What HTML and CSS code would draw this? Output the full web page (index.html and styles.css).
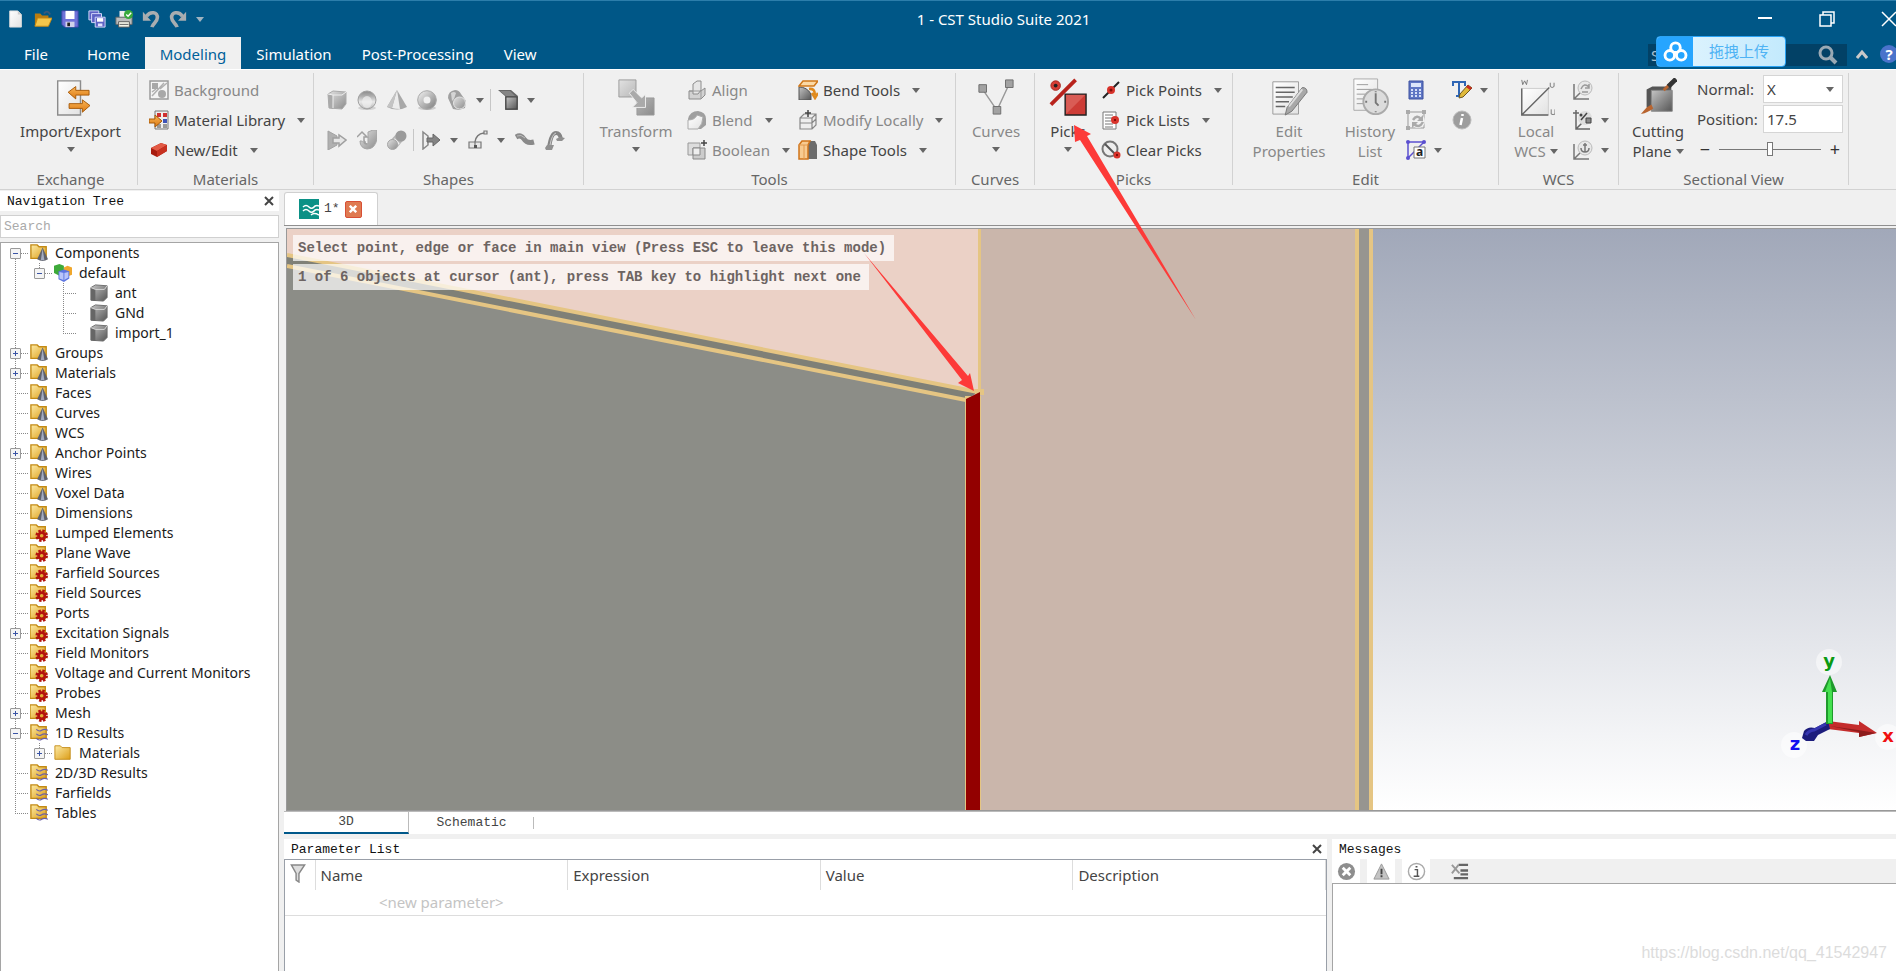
FILE: index.html
```html
<!DOCTYPE html>
<html lang="en">
<head>
<meta charset="utf-8">
<title>1 - CST Studio Suite 2021</title>
<link rel="stylesheet" href="styles.css">
</head>
<body>
<svg class="defs" aria-hidden="true">
  <defs>
    <linearGradient id="gm" x1="0" y1="0" x2="1" y2="1"><stop offset="0" stop-color="#e2e2e2"/><stop offset="1" stop-color="#8c8c8c"/></linearGradient>
    <linearGradient id="gd" x1="0" y1="0" x2="1" y2="1"><stop offset="0" stop-color="#c4c4c4"/><stop offset="1" stop-color="#555"/></linearGradient>
    <linearGradient id="gl" x1="0" y1="0" x2="1" y2="1"><stop offset="0" stop-color="#fff"/><stop offset="1" stop-color="#e2e2e2"/></linearGradient>
    <linearGradient id="gs" x1="0" y1="0" x2="0" y2="1"><stop offset="0" stop-color="#8a8a8a"/><stop offset="0.3" stop-color="#b0b0b0"/><stop offset="0.6" stop-color="#e8e8e8"/><stop offset="1" stop-color="#b5b5b5"/></linearGradient>
    <linearGradient id="gf" x1="0" y1="0" x2="1" y2="1"><stop offset="0" stop-color="#fdeba6"/><stop offset="1" stop-color="#dc9d17"/></linearGradient>
    <linearGradient id="go" x1="0" y1="0" x2="0" y2="1"><stop offset="0" stop-color="#f9b456"/><stop offset="1" stop-color="#dc7a12"/></linearGradient>
    <symbol id="doc" viewBox="0 0 20 20"><path d="M3 1h9l4 4v14H3z" fill="url(#gl)" stroke="#ddd"/><path d="M12 1v4h4" fill="#ccc"/></symbol>
    <symbol id="open" viewBox="0 0 20 20"><path d="M1 4h6l2 2h7v12H1z" fill="#b97c10"/><path d="M4 9h16l-4 9H1z" fill="#f4c64b" stroke="#c98b12"/><path d="M11 4q4-5 7 1" stroke="#3a5a78" fill="none" stroke-width="2"/></symbol>
    <symbol id="save" viewBox="0 0 20 20"><path d="M1 1h18v18H4l-3-3z" fill="#6f72d8" stroke="#4446ac"/><path d="M5 1h10v9H5z" fill="#fff"/><path d="M5 13h10v6H5z" fill="#cfd2ea"/><path d="M7 14h3v4H7z" fill="#222"/></symbol>
    <symbol id="saveall" viewBox="0 0 20 20"><g stroke="#dfe2ff" fill="#5d62c4"><path d="M1 1h11v10H1z"/><path d="M4 4h11v10H4z"/><path d="M8 8h11v11H8z"/></g><path d="M10 9h7v4h-7z" fill="#fff"/><path d="M11 15h5v3h-5z" fill="#dfe2ff"/></symbol>
    <symbol id="print" viewBox="0 0 20 20"><path d="M5 1h10v7H5z" fill="#eee"/><path d="M1 8h18v8H1z" fill="#bdbdbd" stroke="#666"/><path d="M4 13h12v6H4z" fill="#f5f5e8" stroke="#555"/><path d="M5 16h10" stroke="#555"/><circle cx="15" cy="5" r="5" fill="#39a93c"/><path d="M12.500 5l2 2 3.500-4" stroke="#fff" fill="none" stroke-width="1.500"/></symbol>
    <symbol id="undo" viewBox="0 0 20 20"><path d="M5 7c4-6 13-5 12 2 0 4-5 6-6 10" fill="none" stroke="#a9adb0" stroke-width="4"/><path d="M1 2v10h9z" fill="#a9adb0"/></symbol>
    <symbol id="redo" viewBox="0 0 20 20"><path d="M15 7C11 1 2 2 3 9c0 4 5 6 6 10" fill="none" stroke="#a9adb0" stroke-width="4"/><path d="M19 2v10h-9z" fill="#a9adb0"/></symbol>
    <symbol id="impexp" viewBox="0 0 40 40"><path d="M6 3h24v36H6z" fill="url(#gl)" stroke="#8c8c8c" stroke-width="1.500"/><path d="M17 15l8-6v4h14v5H25v4z" fill="url(#go)" stroke="#a85b0a"/><path d="M40 29l-8-6v4H18v5h14v4z" fill="url(#go)" stroke="#a85b0a"/></symbol>
    <symbol id="bg" viewBox="0 0 20 20"><path d="M1 1h18v18H1z" fill="#f4f4f4" stroke="#9a9a9a" stroke-width="1.500"/><path d="M3 3h6v6H3z" fill="#a8a8a8"/><circle cx="13" cy="14" r="4" fill="#a8a8a8"/><path d="M3 16L15 3m-4 6l7-6M3 12l4-3" stroke="#b0b0b0" stroke-width="1.500"/></symbol>
    <symbol id="matlib" viewBox="0 0 20 20"><path d="M6 1h13v18H6z" fill="#eee" stroke="#777"/><path d="M8 3h4v4H8zM14 3h4v4h-4z" fill="#cf3030"/><path d="M8 9h4v4H8z" fill="#666"/><path d="M14 9h4v4h-4z" fill="#3d53b8"/><path d="M8 14h4v4H8zM14 14h4v4h-4z" fill="#999"/><path d="M0 9h6V5l7 6-7 6v-4H0z" fill="url(#go)" stroke="#a85b0a"/></symbol>
    <symbol id="brick" viewBox="0 0 20 20"><path d="M2 8l10-5 6 2v6L8 17l-6-3z" fill="#a81c0f"/><path d="M2 8l10-5 6 2-10 6z" fill="#e35a45"/><path d="M8 11v6l10-6V5z" fill="#c73120"/></symbol>
    <symbol id="cube" viewBox="0 0 20 20"><path d="M1 4l5-3 13 1v12l-4 5-13-1z" fill="url(#gm)" stroke="#aaa"/><path d="M1 4l5 1v14l-4-1z" fill="#aaa"/><path d="M1 4l5 1 9 0 4-3M6 5v13" fill="none" stroke="#eee"/></symbol>
    <symbol id="cubed" viewBox="0 0 20 20"><path d="M1 4l5-3 13 1v13l-4 4-14-1z" fill="url(#gd)" stroke="#666"/><path d="M1 4l5 2v13l-5-1z" fill="#666"/><path d="M1 4l5 2h10l3-4" fill="none" stroke="#ddd"/></symbol>
    <symbol id="sphere" viewBox="0 0 20 20"><ellipse cx="10" cy="18" rx="9" ry="2" fill="#d2d2d2"/><circle cx="10" cy="10" r="9" fill="url(#gs)" stroke="#a0a0a0"/><ellipse cx="10" cy="12" rx="5" ry="6" fill="#efefef" fill-opacity="0.700"/></symbol>
    <symbol id="cone" viewBox="0 0 20 20"><path d="M10 0l10 17q-10 5-20 0z" fill="#a8a8a8"/><path d="M10 0l3 19q-5 0-8-1z" fill="#ececec"/><path d="M10 0L5 18l-5-1z" fill="#c4c4c4"/></symbol>
    <symbol id="torus" viewBox="0 0 20 20"><ellipse cx="10" cy="18" rx="9" ry="2" fill="#ccc"/><circle cx="10" cy="10" r="6.500" fill="none" stroke="url(#gm)" stroke-width="6"/><circle cx="10" cy="10" r="9.300" fill="none" stroke="#aaa"/></symbol>
    <symbol id="cyl" viewBox="0 0 20 20"><path d="M1 8q0-7 7-8 4 0 6 4l5 7-1 7-6 2-6-1z" fill="#a0a0a0"/><path d="M4 3q3-2 5 0L7 9l-2 2z" fill="#d5d5d5"/><circle cx="12.500" cy="13" r="6" fill="url(#gm)" stroke="#e4e4e4"/></symbol>
    <symbol id="extr" viewBox="0 0 20 20"><path d="M0 0h13l7 6v14H7V6z" fill="#666"/><path d="M2 1h10l5 5H8z" fill="#858585"/><path d="M8 7h11v12H8z" fill="url(#gd)" stroke="#444"/></symbol>
    <symbol id="push" viewBox="0 0 20 20"><path d="M1 1l9 5v9l-9 5z" fill="#b0b0b0" stroke="#a2a2a2"/><path d="M6 8h6V5l7 5-7 6v-3H6z" fill="#e6e6e6" stroke="#a0a0a0" stroke-width="1.500"/></symbol>
    <symbol id="rot" viewBox="0 0 20 20"><path d="M11 2l5-2h4v9q-2 10-10 10-7-1-7-8h5q0 3 3 3z" fill="url(#gm)" stroke="#a5a5a5"/><path d="M0 7l5-5 5 5H7v4q0 3 3 3" fill="#eee" stroke="#a0a0a0" stroke-width="1.500"/></symbol>
    <symbol id="loft" viewBox="0 0 20 20"><path d="M1 13L12 1l7 6L9 19q-7 1-8-6z" fill="#b5b5b5"/><circle cx="14" cy="6" r="5.500" fill="#9a9a9a"/><path d="M7 9l5 5" stroke="#eee" stroke-width="2"/><circle cx="5.500" cy="14.500" r="5" fill="url(#gm)" stroke="#a5a5a5"/></symbol>
    <symbol id="face" viewBox="0 0 20 20"><path d="M2 2l5 4v9l-5 4z" fill="#eee" stroke="#888" stroke-width="1.500"/><path d="M6 8h6V4l7 6-7 6v-4H6z" fill="#848484" stroke="#666"/></symbol>
    <symbol id="bond" viewBox="0 0 20 20"><path d="M1 12h12v6H1zM7 12v6M16 1h3v3h-3z" fill="#e6e6e6" stroke="#777" stroke-width="1.200"/><path d="M6 15h3v3H6z" fill="#555"/><path d="M7 12Q8 4 16 3" fill="none" stroke="#777" stroke-width="1.500"/></symbol>
    <symbol id="wave" viewBox="0 0 20 20"><path d="M1 7q5-3 8 2t10 3" fill="none" stroke="#8a8a8a" stroke-width="5"/><path d="M2 6q4-2 8 2" fill="none" stroke="#bbb"/></symbol>
    <symbol id="wire" viewBox="0 0 20 20"><path d="M4 18Q6 3 11 3q4 0 5 6" fill="none" stroke="#858585" stroke-width="4"/><path d="M11 9l4-2 5 1-3 3h-5zM0 18l2-3h7l-2 5H1z" fill="#909090"/><path d="M5 15Q7 4 11 3" fill="none" stroke="#ccc"/></symbol>
    <symbol id="trans" viewBox="0 0 40 40"><path d="M2 2h18v18H2zM21 21h18v18H21z" fill="url(#gm)" stroke="#9b9b9b"/><path d="M13 16l4-4 9 9 4-4v14H16l5-5z" fill="#aaa" stroke="#eee"/></symbol>
    <symbol id="align" viewBox="0 0 20 20"><path d="M2 11h12l4-3v7l-4 4H2z" fill="#d2d2d2" stroke="#8c8c8c"/><path d="M6 4l4-3h4v9l-3 4H6z" fill="#e6e6e6" stroke="#8c8c8c"/><path d="M2 11h12v8" fill="none" stroke="#999"/></symbol>
    <symbol id="blend" viewBox="0 0 20 20"><path d="M1 19V9q2-8 10-8 8 1 8 8v6l-5 4z" fill="#9f9f9f"/><path d="M1 10q7 0 9-5l6 2q0 7-5 12H1z" fill="url(#gl)" stroke="#aaa"/></symbol>
    <symbol id="bool" viewBox="0 0 20 20"><path d="M1 3h12v12H1z" fill="#ddd" stroke="#999"/><path d="M6 8h12v11H6z" fill="#ccc" stroke="#888"/><path d="M6 8h7v7H6z" fill="#eee" stroke="#888"/><path d="M17 0v6M14 3h6" stroke="#444" stroke-width="1.500"/></symbol>
    <symbol id="bend" viewBox="0 0 20 20"><path d="M1 7q8 0 12 7v6H1z" fill="url(#gd)" stroke="#555"/><path d="M5 1h15l-4 5H1z" fill="#fbd9a5" stroke="#d0781a" stroke-width="1.500"/><path d="M11 9q6-1 6 6m-3-2l3 5 3-5" fill="none" stroke="#e08a1c" stroke-width="2.500"/></symbol>
    <symbol id="modify" viewBox="0 0 20 20"><path d="M2 8l4-4h12v11l-4 4H2zM2 8h12l4-4M14 8v11M2 13h12l4-4" fill="#eee" stroke="#888" stroke-width="1.200"/><path d="M10 0v7M7 3h6" stroke="#444" stroke-width="1.500"/></symbol>
    <symbol id="shape" viewBox="0 0 20 20"><path d="M10 5l2-4h5l2 4v14h-9z" fill="#6c6c6c"/><path d="M1 5l3-4h8l-2 4v14H1z" fill="#f8cb91" stroke="#d0741a" stroke-width="1.500"/><path d="M1 5h9M6 5v14" stroke="#e39a4e"/></symbol>
    <symbol id="curve" viewBox="0 0 40 40"><path d="M6 12l15 22L34 6" fill="none" stroke="#999" stroke-width="1.500"/><g fill="#a2a2a2" stroke="#6d6d6d"><path d="M2 7h8v8H2zM30 2h8v8h-8zM17 30h8v8h-8z"/></g></symbol>
    <symbol id="picks" viewBox="0 0 40 40"><path d="M2 28L28 2" stroke="#b8231c" stroke-width="4"/><circle cx="7" cy="8" r="5" fill="#d63e35" stroke="#a8241c"/><circle cx="7" cy="8" r="2" fill="#222"/><path d="M17 17h22v22H17z" fill="#cd3c36" stroke="#222" stroke-width="1.500"/><path d="M18 38V18h20z" fill="#d95c55"/></symbol>
    <symbol id="ppts" viewBox="0 0 20 20"><path d="M2 18L18 2" stroke="#222" stroke-width="2"/><circle cx="10" cy="10" r="4" fill="#d8332b"/><circle cx="10" cy="10" r="1.500" fill="#7e100b"/></symbol>
    <symbol id="plst" viewBox="0 0 20 20"><path d="M2 2h13v17H2z" fill="#fff" stroke="#777"/><path d="M4 5h8M4 8h7M4 11h6M4 14h8M4 17h8" stroke="#777"/><circle cx="14" cy="10" r="4" fill="#d8332b"/><circle cx="14" cy="10" r="1" fill="#600"/></symbol>
    <symbol id="pclr" viewBox="0 0 20 20"><circle cx="9" cy="9" r="7.500" fill="#eee" stroke="#777" stroke-width="2"/><path d="M4 4l10 10" stroke="#555" stroke-width="2"/><circle cx="16" cy="15" r="3.500" fill="#d8332b"/><circle cx="16" cy="15" r="1" fill="#600"/></symbol>
    <symbol id="eprop" viewBox="0 0 40 40"><path d="M3 4h27v34H3z" fill="url(#gl)" stroke="#999"/><path d="M6 10h20M6 15h20M6 20h18M6 25h14M6 30h10" stroke="#666" stroke-width="1.500"/><path d="M34 10q5 0 5 5L23 35l-7 4 2-8z" fill="#a8a8a8" stroke="#777"/><path d="M20 30l14-18" stroke="#ddd" stroke-width="2"/></symbol>
    <symbol id="hist" viewBox="0 0 40 40"><path d="M3 1h25v33H3z" fill="url(#gl)" stroke="#aaa"/><path d="M6 7h12M6 12h16M6 17h9M6 22h7M6 27h7" stroke="#999"/><circle cx="26" cy="25" r="13" fill="#dcdcdc" stroke="#aaa" stroke-width="2"/><path d="M26 16v10l3 3M26 14v1M37 25h-2M26 36v-1M15 25h2" stroke="#777" stroke-width="2" fill="none"/></symbol>
    <symbol id="calc" viewBox="0 0 20 20"><path d="M3 1h14v18H3z" fill="#5f76c4" stroke="#3c51a0"/><path d="M5 3h10v4H5z" fill="#dce6fa"/><path d="M5 10h10M5 13h10M5 16h10" stroke="#d5dff8" stroke-width="2" stroke-dasharray="2 2"/></symbol>
    <symbol id="upd" viewBox="0 0 20 20"><path d="M2 2h16v16H2z" fill="none" stroke="#999"/><g fill="#aaa"><path d="M0 0h4v4H0zM16 0h4v4h-4zM0 16h4v4H0z"/></g><circle cx="12" cy="11" r="7" fill="#f0f0f0"/><path d="M7 10q4-6 8-1M17 12q-4 7-9 2" fill="none" stroke="#aaa" stroke-width="2.500"/><path d="M17 5v6h-6zM6 18v-6h6z" fill="#aaa"/></symbol>
    <symbol id="ren" viewBox="0 0 20 20"><path d="M2 18V2h16M2 18L18 2" fill="none" stroke="#5b50d0" stroke-width="1.500"/><g fill="#5b50d0"><circle cx="2" cy="2" r="2"/><circle cx="18" cy="2" r="2"/><circle cx="2" cy="18" r="2"/></g><path d="M8 7h11v11H8z" fill="#fff" stroke="#777"/><text x="10" y="16" font-size="12" font-weight="700" fill="#222">a</text></symbol>
    <symbol id="txt" viewBox="0 0 20 20"><path d="M1 6V2h12v4M7 2v14M4 16h6" fill="none" stroke="#2f66b5" stroke-width="2"/><path d="M16 5l4 3-9 9-4 1 1-4z" fill="#dfb93a" stroke="#6c5620"/><path d="M16 5l4 3-2 2-4-3z" fill="#c92a22"/></symbol>
    <symbol id="info" viewBox="0 0 20 20"><circle cx="10" cy="10" r="9" fill="#9d9d9d" stroke="#bbb"/><path d="M10 8l-1.500 7M10.500 4v2" stroke="#fff" stroke-width="2.500"/></symbol>
    <symbol id="wcs" viewBox="0 0 40 40"><path d="M5 11h28v28H5z" fill="url(#gl)" stroke="#ccc"/><path d="M5 11v28h28M5 39L34 10" fill="none" stroke="#666" stroke-width="1.500"/><path d="M5 2l1 5 2-4 2 4 1-5M35 5v4q2 2 4 0V5M36 33v5q2 1 4 0v-5" fill="none" stroke="#777"/></symbol>
    <symbol id="w1" viewBox="0 0 20 20"><path d="M1 4v15h15M1 19l8-8" fill="none" stroke="#777" stroke-width="1.500"/><circle cx="12" cy="8" r="7" fill="#e8e8e8" stroke="#bbb"/><path d="M8 9q3-7 8-2M9 12h6M16 4v4h-4" stroke="#999" fill="none" stroke-width="1.500"/></symbol>
    <symbol id="w2" viewBox="0 0 20 20"><path d="M3 4v15h14M3 19l7-7M0 3h6M3 0v6" fill="none" stroke="#666" stroke-width="1.500"/><circle cx="12" cy="8" r="7" fill="#ddd"/><path d="M8 10l6-7" stroke="#444" stroke-width="1.500"/><circle cx="8" cy="5" r="1.500" fill="#444"/><path d="M13 8h5v5h-5z" fill="#888" stroke="#444"/></symbol>
    <symbol id="w3" viewBox="0 0 20 20"><path d="M1 4v15h15M1 19l8-8" fill="none" stroke="#777" stroke-width="1.500"/><circle cx="12" cy="8" r="7" fill="#e8e8e8" stroke="#bbb"/><path d="M12 3v9M8 8q0 4 4 4t4-4M10 5h4" stroke="#777" fill="none" stroke-width="1.500"/></symbol>
    <symbol id="cut" viewBox="0 0 40 40"><path d="M8 12l6-3h20v22l-4 4-22-4z" fill="#555"/><path d="M13 13h22v22H13z" fill="url(#gd)" stroke="#888"/><path d="M35 4l-9 9" stroke="#b8642f" stroke-width="3"/><path d="M39 1l-8 8" stroke="#333" stroke-width="5"/><path d="M13 28l-5 3-6 7q8-2 13-6z" fill="#b8642f"/></symbol>
    <symbol id="fold" viewBox="0 0 20 20"><path d="M1 2h6l2 2h9v13H1z" fill="url(#gf)" stroke="#c38a14"/></symbol>
    <symbol id="fcone" viewBox="0 0 20 20"><path d="M1 1h7l2 2h8v13H1z" fill="url(#gf)" stroke="#c38a14" stroke-width="1.500"/><path d="M14 4l6 13q-6 4-12 0z" fill="#60626b"/><path d="M14 5l2 13h-4z" fill="#a3abc0"/></symbol>
    <symbol id="fgear" viewBox="0 0 20 20"><path d="M0 1h7l2 2h8v13H0z" fill="url(#gf)" stroke="#c38a14" stroke-width="1.500"/><circle cx="13" cy="13" r="5" fill="none" stroke="#b3130f" stroke-width="4" stroke-dasharray="2.400 1.530"/><circle cx="13" cy="13" r="3.500" fill="none" stroke="#b3130f" stroke-width="3"/></symbol>
    <symbol id="fwave" viewBox="0 0 20 20"><path d="M1 1h7l2 2h8v13H1z" fill="url(#gf)" stroke="#c38a14" stroke-width="1.500"/><path d="M7 6q3 3 6 1t7 0M7 11q3 3 6 1t7 0M7 16q3 3 6 1t7 0" fill="none" stroke="#6c60a8" stroke-width="1.300"/></symbol>
    <symbol id="comp" viewBox="0 0 20 20"><path d="M0 2l6-2 5 2v9l-5 2-6-3z" fill="#3eaa3a"/><path d="M11 4l4-2 5 2v8l-5 2-4-2z" fill="#f0a72c"/><path d="M5 8l6-2 6 2v8l-6 4-6-3z" fill="#5c74e0"/><path d="M6 9l5 1 5-1v6l-5 3-5-2z" fill="#b9c5fb"/><path d="M11 10v8" stroke="#5c74e0"/></symbol>
  </defs>
</svg>

<header class="top">
  <div class="titlebar">
    <div class="quick">
      <button aria-label="New"><svg><use href="#doc"/></svg></button>
      <button aria-label="Open"><svg><use href="#open"/></svg></button>
      <button aria-label="Save"><svg><use href="#save"/></svg></button>
      <button aria-label="Save all"><svg><use href="#saveall"/></svg></button>
      <button aria-label="Print"><svg><use href="#print"/></svg></button>
      <button aria-label="Undo"><svg><use href="#undo"/></svg></button>
      <button aria-label="Redo"><svg><use href="#redo"/></svg></button>
      <button class="more" aria-label="Customize"><i class="caret"></i></button>
    </div>
    <h1>1 - CST Studio Suite 2021</h1>
    <div class="win">
      <button aria-label="Minimize"><svg viewBox="0 0 16 16"><path d="M1 7h14" stroke-width="2"/></svg></button>
      <button aria-label="Restore"><svg viewBox="0 0 16 16"><path d="M1 4h11v11H1zM4 4V1h11v11h-3"/></svg></button>
      <button aria-label="Close"><svg viewBox="0 0 16 16"><path d="M1 1l14 14M15 1L1 15"/></svg></button>
    </div>
  </div>
  <div class="menubar">
    <nav>
      <a class="file" href="#">File</a><a href="#">Home</a><a class="on" href="#">Modeling</a><a href="#">Simulation</a><a href="#">Post-Processing</a><a href="#">View</a>
    </nav>
    <div class="search">
      <input type="text" placeholder="Search" aria-label="Search">
      <svg viewBox="0 0 20 20"><circle cx="8" cy="8" r="6" fill="none" stroke="#9aa9b4" stroke-width="3"/><path d="M12 12l6 6" stroke="#9aa9b4" stroke-width="4"/></svg>
      <button class="upload"><span class="cloud"><svg viewBox="0 0 26 22"><g fill="none" stroke="#fff" stroke-width="3"><circle cx="13" cy="7" r="5"/><circle cx="7" cy="15" r="5"/><circle cx="19" cy="15" r="5"/></g></svg></span><span class="cn">拖拽上传</span></button>
    </div>
    <button class="fold" aria-label="Collapse ribbon"><svg viewBox="0 0 12 10"><path d="M1 9l5-6 5 6" fill="none" stroke="#c9c9c9" stroke-width="3"/></svg></button>
    <button class="help" aria-label="Help">?</button>
  </div>
</header>

<section class="ribbon">
  <div class="group g-exchange">
    <div class="tools"><button class="big"><svg><use href="#impexp"/></svg>Import/Export<i class="caret"></i></button></div>
    <h2>Exchange</h2>
  </div>
  <div class="group g-materials">
    <div class="tools"><div class="col">
      <button class="off"><svg><use href="#bg"/></svg>Background</button>
      <button><svg><use href="#matlib"/></svg>Material Library<i class="caret"></i></button>
      <button><svg><use href="#brick"/></svg>New/Edit<i class="caret"></i></button>
    </div></div>
    <h2>Materials</h2>
  </div>
  <div class="group g-shapes">
    <div class="tools"><div class="shapes">
      <div class="line">
        <button aria-label="Brick"><svg><use href="#cube"/></svg></button><button aria-label="Sphere"><svg><use href="#sphere"/></svg></button><button aria-label="Cone"><svg><use href="#cone"/></svg></button><button aria-label="Torus"><svg><use href="#torus"/></svg></button><button aria-label="Cylinder"><svg><use href="#cyl"/></svg><i class="caret"></i></button><span class="bar"></span><button aria-label="Extrude"><svg><use href="#extr"/></svg><i class="caret"></i></button>
      </div>
      <div class="line">
        <button aria-label="Extrude face"><svg><use href="#push"/></svg></button><button aria-label="Rotate"><svg><use href="#rot"/></svg></button><button aria-label="Loft"><svg><use href="#loft"/></svg></button><span class="bar"></span><button aria-label="Face"><svg><use href="#face"/></svg><i class="caret"></i></button><button aria-label="Bond wire"><svg><use href="#bond"/></svg><i class="caret"></i></button><button aria-label="Sweep"><svg><use href="#wave"/></svg></button><button aria-label="Wire"><svg><use href="#wire"/></svg></button>
      </div>
    </div></div>
    <h2>Shapes</h2>
  </div>
  <div class="group g-tools">
    <div class="tools">
      <button class="big off"><svg><use href="#trans"/></svg>Transform<i class="caret"></i></button>
      <div class="col">
        <button class="off"><svg><use href="#align"/></svg>Align</button>
        <button class="off"><svg><use href="#blend"/></svg>Blend<i class="caret"></i></button>
        <button class="off"><svg><use href="#bool"/></svg>Boolean<i class="caret"></i></button>
      </div>
      <div class="col">
        <button><svg><use href="#bend"/></svg>Bend Tools<i class="caret"></i></button>
        <button class="off"><svg><use href="#modify"/></svg>Modify Locally<i class="caret"></i></button>
        <button><svg><use href="#shape"/></svg>Shape Tools<i class="caret"></i></button>
      </div>
    </div>
    <h2>Tools</h2>
  </div>
  <div class="group g-curves">
    <div class="tools"><button class="big off"><svg><use href="#curve"/></svg>Curves<i class="caret"></i></button></div>
    <h2>Curves</h2>
  </div>
  <div class="group g-picks">
    <div class="tools">
      <button class="big"><svg><use href="#picks"/></svg>Picks<i class="caret"></i></button>
      <div class="col">
        <button><svg><use href="#ppts"/></svg>Pick Points<i class="caret"></i></button>
        <button><svg><use href="#plst"/></svg>Pick Lists<i class="caret"></i></button>
        <button><svg><use href="#pclr"/></svg>Clear Picks</button>
      </div>
    </div>
    <h2>Picks</h2>
  </div>
  <div class="group g-edit">
    <div class="tools">
      <button class="big off"><svg><use href="#eprop"/></svg>Edit<br>Properties</button>
      <button class="big off"><svg><use href="#hist"/></svg>History<br>List</button>
      <div class="col">
        <button aria-label="Calculator"><svg><use href="#calc"/></svg></button>
        <button aria-label="Update"><svg><use href="#upd"/></svg></button>
        <button aria-label="Rename"><svg><use href="#ren"/></svg><i class="caret"></i></button>
      </div>
      <div class="col">
        <button aria-label="Text"><svg><use href="#txt"/></svg><i class="caret"></i></button>
        <button aria-label="Information"><svg><use href="#info"/></svg></button>
      </div>
    </div>
    <h2>Edit</h2>
  </div>
  <div class="group g-wcs">
    <div class="tools">
      <button class="big off"><svg><use href="#wcs"/></svg>Local<span>WCS <i class="caret"></i></span></button>
      <div class="col">
        <button aria-label="Transform WCS"><svg><use href="#w1"/></svg></button>
        <button aria-label="Align WCS"><svg><use href="#w2"/></svg><i class="caret"></i></button>
        <button aria-label="Fix WCS"><svg><use href="#w3"/></svg><i class="caret"></i></button>
      </div>
    </div>
    <h2>WCS</h2>
  </div>
  <div class="group g-section">
    <div class="tools">
      <button class="big"><svg><use href="#cut"/></svg>Cutting<span>Plane <i class="caret"></i></span></button>
      <div class="fields">
        <label for="normal">Normal:</label>
        <span class="pick"><select id="normal"><option>X</option><option>Y</option><option>Z</option></select><i class="caret"></i></span>
        <label for="position">Position:</label>
        <input id="position" type="text" value="17.5">
        <div class="slide"><button aria-label="Decrease">−</button><input type="range" min="0" max="100" value="50" aria-label="Position slider"><button aria-label="Increase">+</button></div>
      </div>
    </div>
    <h2>Sectional View</h2>
  </div>
</section>

<div class="work">
  <aside>
    <div class="paneltitle"><h3>Navigation Tree</h3><button class="x" aria-label="Close Navigation Tree"><svg viewBox="0 0 10 10"><path d="M1 1l8 8M9 1L1 9"/></svg></button></div>
    <input class="find" type="text" placeholder="Search" aria-label="Search tree">
    <div class="treebox">
      <ul class="tree">
        <li><div class="row"><span class="joint"><button class="minus" aria-label="Collapse"></button></span><svg><use href="#fcone"/></svg>Components</div>
          <ul>
            <li><div class="row"><span class="joint"><button class="minus" aria-label="Collapse"></button></span><svg><use href="#comp"/></svg>default</div>
              <ul class="leafs">
                <li><div class="row"><span class="joint"></span><svg><use href="#cubed"/></svg>ant</div></li>
                <li><div class="row"><span class="joint"></span><svg><use href="#cubed"/></svg>GNd</div></li>
                <li><div class="row"><span class="joint"></span><svg><use href="#cubed"/></svg>import_1</div></li>
              </ul>
            </li>
          </ul>
        </li>
        <li><div class="row"><span class="joint"><button class="plus" aria-label="Expand"></button></span><svg><use href="#fcone"/></svg>Groups</div></li>
        <li><div class="row"><span class="joint"><button class="plus" aria-label="Expand"></button></span><svg><use href="#fcone"/></svg>Materials</div></li>
        <li><div class="row"><span class="joint"></span><svg><use href="#fcone"/></svg>Faces</div></li>
        <li><div class="row"><span class="joint"></span><svg><use href="#fcone"/></svg>Curves</div></li>
        <li><div class="row"><span class="joint"></span><svg><use href="#fcone"/></svg>WCS</div></li>
        <li><div class="row"><span class="joint"><button class="plus" aria-label="Expand"></button></span><svg><use href="#fcone"/></svg>Anchor Points</div></li>
        <li><div class="row"><span class="joint"></span><svg><use href="#fcone"/></svg>Wires</div></li>
        <li><div class="row"><span class="joint"></span><svg><use href="#fcone"/></svg>Voxel Data</div></li>
        <li><div class="row"><span class="joint"></span><svg><use href="#fcone"/></svg>Dimensions</div></li>
        <li><div class="row"><span class="joint"></span><svg><use href="#fgear"/></svg>Lumped Elements</div></li>
        <li><div class="row"><span class="joint"></span><svg><use href="#fgear"/></svg>Plane Wave</div></li>
        <li><div class="row"><span class="joint"></span><svg><use href="#fgear"/></svg>Farfield Sources</div></li>
        <li><div class="row"><span class="joint"></span><svg><use href="#fgear"/></svg>Field Sources</div></li>
        <li><div class="row"><span class="joint"></span><svg><use href="#fgear"/></svg>Ports</div></li>
        <li><div class="row"><span class="joint"><button class="plus" aria-label="Expand"></button></span><svg><use href="#fgear"/></svg>Excitation Signals</div></li>
        <li><div class="row"><span class="joint"></span><svg><use href="#fgear"/></svg>Field Monitors</div></li>
        <li><div class="row"><span class="joint"></span><svg><use href="#fgear"/></svg>Voltage and Current Monitors</div></li>
        <li><div class="row"><span class="joint"></span><svg><use href="#fgear"/></svg>Probes</div></li>
        <li><div class="row"><span class="joint"><button class="plus" aria-label="Expand"></button></span><svg><use href="#fgear"/></svg>Mesh</div></li>
        <li><div class="row"><span class="joint"><button class="minus" aria-label="Collapse"></button></span><svg><use href="#fwave"/></svg>1D Results</div>
          <ul><li><div class="row"><span class="joint"><button class="plus" aria-label="Expand"></button></span><svg><use href="#fold"/></svg>Materials</div></li></ul>
        </li>
        <li><div class="row"><span class="joint"></span><svg><use href="#fwave"/></svg>2D/3D Results</div></li>
        <li><div class="row"><span class="joint"></span><svg><use href="#fwave"/></svg>Farfields</div></li>
        <li><div class="row"><span class="joint"></span><svg><use href="#fwave"/></svg>Tables</div></li>
      </ul>
    </div>
  </aside>

  <main>
    <div class="doctabs">
      <div class="doctab"><svg viewBox="0 0 20 20"><path d="M0 0h20v20H0z" fill="#0b9186"/><path d="M4 8q3-3 6 0t6-1q2-1 4 0M4 12q3-3 6 0t6-1q2-1 4 0M12 16q3-3 8 0" fill="none" stroke="#fff" stroke-width="1.500"/></svg><span>1*</span><button aria-label="Close document"><svg viewBox="0 0 10 10"><path d="M1 1l8 8M9 1L1 9"/></svg></button></div>
    </div>
    <div class="view">
      <svg class="scene" aria-label="3D model">
        <path d="M0 0h693v163L0 26z" fill="#ebd1c6"/>
        <path d="M0 26l691 137-12 8L0 37z" fill="#7f8077"/>
        <path d="M0 37l679 134V2000H0z" fill="#8c8d87"/>
        <path d="M0 26l691 137M0 37l679 134" stroke="#e5c583" stroke-width="4" fill="none"/>
        <path d="M693 0h376v2000H693z" fill="#cab6ab"/>
        <path d="M691 0h3v165h-3zM1068 0h4v2000h-4zM1082 0h4v2000h-4zM678 167h16v2000h-16zM688 160h9v6h-9z" fill="#e5c583"/>
        <path d="M1072 0h10v2000h-10z" fill="#979590"/>
        <path d="M679 170l14-7v2000h-14z" fill="#930000"/>
      </svg>
      <p class="hint">Select point, edge or face in main view (Press ESC to leave this mode)</p>
      <p class="hint">1 of 6 objects at cursor (ant), press TAB key to highlight next one</p>
      <svg class="axes" viewBox="0 0 120 120" aria-label="Coordinate axes">
        <g fill="#fff" fill-opacity="0.500"><circle cx="53" cy="13" r="13"/><circle cx="112" cy="88" r="13"/><circle cx="18" cy="96" r="13"/></g>
        <path d="M52 72l31 4v-4l18 12-18 4v-4l-31-4z" fill="#c42c2c"/><path d="M54 77l28 4 18 3-17 4v-5z" fill="#8d1c1c"/>
        <path d="M52 72L39 79q-7-2-11 3l-2 7 4 3h8l4-6 12-6z" fill="#1c1c7c"/><path d="M50 75l-12 6q-6 1-8 5" fill="none" stroke="#3636b0" stroke-width="3"/>
        <path d="M50 75V43h-4l8-17 7 17h-4v32z" fill="#1f9a2c"/><path d="M52 74V43h-3l5-14 2 14v31z" fill="#44e04f"/>
        <text x="53" y="18" fill="#0a9a12">y</text><text x="112" y="93" fill="#f01010">x</text><text x="19" y="101" fill="#1010f0">z</text>
      </svg>
    </div>
    <div class="viewtabs"><button class="on">3D</button><button class="alt">Schematic</button></div>
    <div class="panels">
      <section class="params">
        <div class="paneltitle"><h3>Parameter List</h3><button class="x" aria-label="Close Parameter List"><svg viewBox="0 0 10 10"><path d="M1 1l8 8M9 1L1 9"/></svg></button></div>
        <div class="tablebox">
          <table>
            <thead><tr><th class="filter"><svg viewBox="0 0 16 20"><path d="M1 1h14L9 10v9l-3-2v-7z" fill="#ddd" stroke="#888" stroke-width="1.500"/></svg></th><th>Name</th><th>Expression</th><th>Value</th><th>Description</th></tr></thead>
            <tbody><tr><td></td><td class="new">&lt;new parameter&gt;</td><td></td><td></td><td></td></tr></tbody>
          </table>
        </div>
      </section>
      <section class="messages">
        <div class="paneltitle"><h3>Messages</h3></div>
        <div class="msgbar">
          <button aria-label="Errors"><svg viewBox="0 0 20 20"><circle cx="10" cy="10" r="9" fill="#8e8e8e"/><path d="M6 6l8 8M14 6l-8 8" stroke="#fff" stroke-width="3"/></svg></button>
          <button aria-label="Warnings"><svg viewBox="0 0 20 20"><path d="M10 2l8 16H2z" fill="#c4c4c4" stroke="#999"/><path d="M10 7v6M10 14v2" stroke="#444" stroke-width="2"/></svg></button>
          <button aria-label="Information"><svg viewBox="0 0 20 20"><circle cx="10" cy="10" r="8.500" fill="#fff" stroke="#aaa" stroke-width="1.500"/><path d="M8 8h3v7M7 15h6M9 5h2" fill="none" stroke="#555" stroke-width="1.500"/></svg></button>
          <button class="clear" aria-label="Clear messages"><svg viewBox="0 0 20 20"><path d="M9 3h10M11 9h8M4 17h15M11 13h8" stroke="#666" stroke-width="2.500"/><path d="M2 3l8 9M9 3l-7 9" stroke="#999" stroke-width="2"/></svg></button>
        </div>
        <div class="msgbody"></div>
      </section>
    </div>
  </main>
</div>
<svg class="marks" aria-hidden="true">
  <path d="M864 253l104 123 2-3 4 18-16-8 4-3zM1074 125l17 9-4 2 109 184L1080 140l-5 2z" fill="#fd3a38"/>
</svg>
<p class="stamp">https://blog.csdn.net/qq_41542947</p>
</body>
</html>
```
FILE: styles.css
```css
* { box-sizing: border-box; }
body {
  margin: 0;
  height: 100vh;
  display: flex;
  flex-direction: column;
  overflow: hidden;
  position: relative;
  background: #f0f0f0;
  color: #444;
  font: 15px/20px "Noto Sans", "Open Sans", sans-serif;
}
h1, h2, h3, p, ul { margin: 0; padding: 0; font-weight: 400; }
ul { list-style: none; }
button { border: 0; padding: 0; background: none; color: inherit; font: inherit; }
input, select { font: inherit; color: inherit; border-radius: 0; }
.defs { position: absolute; width: 0; height: 0; }
.caret { width: 0; height: 0; flex: none; border: 4px solid transparent; border-top: 5px solid #666; border-bottom: 0; }

.top { flex: none; background: #005787; border-top: 1px solid #2c7eab; color: #fff; }
.titlebar { display: flex; align-items: center; height: 36px; }
.quick { display: flex; gap: 9px; padding-left: 7px; }
.quick button { display: flex; align-items: center; }
.quick svg { width: 18px; height: 18px; }
.quick .caret { border-top-color: #9fb3c0; }
.titlebar h1 { flex: 1; padding-left: 46px; text-align: center; font-size: 15px; }
.win { display: flex; gap: 46px; margin-right: -1px; }
.win svg { display: block; width: 16px; height: 16px; fill: none; stroke: #fff; stroke-width: 1.5; }
.menubar { display: flex; align-items: stretch; height: 32px; }
nav { display: flex; flex: 1; }
nav a { padding: 0 15px; color: #fff; line-height: 34px; text-decoration: none; }
nav .file { width: 72px; padding: 0 24px; }
nav .on { background: #f0f0f0; color: #00609a; }
.search { position: relative; display: flex; align-items: center; width: 199px; height: 22px; margin-top: 7px; padding-right: 9px; background: #024166; }
.search input { flex: 1; min-width: 0; border: 0; padding: 0 3px; background: none; outline: 0; font-size: 15px; }
.search input::placeholder { color: #aac2d0; }
.search > svg { width: 20px; height: 20px; }
.upload { position: absolute; left: 8px; top: -8px; display: flex; width: 130px; height: 31px; overflow: hidden; border: 1px solid #2aa3f5; border-radius: 4px; background: linear-gradient(90deg, #e4f5fe, #c3eafd); }
.cloud { display: flex; align-items: center; justify-content: center; width: 36px; background: #26a5ff; }
.cloud svg { width: 25px; height: 21px; }
.cn { flex: 1; color: #4fb3f4; font: 15px/28px "Noto Sans CJK SC", sans-serif; }
.fold { width: 28px; padding: 0 7px 0 9px; }
.fold svg { width: 12px; height: 10px; }
.help { width: 18px; height: 18px; margin: 8px -2px 0 5px; border-radius: 9px; background: #4a73cb; color: #fff; font: bold 15px/18px "Noto Sans", sans-serif; }

.ribbon { flex: none; display: flex; height: 121px; padding-top: 3px; border-top: 1px solid #fff; border-bottom: 1px solid #d2d2d2; }
.group { display: flex; flex-direction: column; flex: none; height: 112px; border-right: 1px solid #d2d2d2; }
.group h2 { flex: none; color: #666; font-size: 15px; line-height: 24px; text-align: center; }
.tools { display: flex; flex: none; height: 94px; padding-top: 2px; }
.big { display: flex; flex: none; flex-direction: column; align-items: center; width: 90px; padding-top: 3px; white-space: nowrap; }
.big svg { width: 38px; height: 38px; margin-bottom: 5px; flex: none; }
.big > .caret { margin-top: 6px; }
.big span { display: flex; align-items: center; gap: 4px; }
.off { color: #888; }
.col { flex: none; }
.col button { display: flex; align-items: center; height: 30px; white-space: nowrap; }
.col svg { width: 20px; height: 20px; margin-right: 5px; flex: none; }
.col .caret { margin-left: 12px; }
.g-exchange { width: 138px; }
.g-exchange .tools { justify-content: center; padding-left: 4px; }
.g-exchange h2 { padding-left: 4px; }
.g-materials { width: 176px; }
.g-materials .tools { padding-left: 11px; }
.g-shapes { width: 270px; }
.shapes { display: flex; flex-direction: column; gap: 18px; padding: 14px 0 0 13px; }
.line { display: flex; align-items: center; gap: 10px; height: 22px; }
.line button { display: flex; align-items: center; }
.line svg { width: 20px; height: 20px; flex: none; }
.line .caret { margin: 0 0 0 9px; }
.bar { width: 1px; height: 22px; margin: 0 -3px 0 -4px; background: #c6c6c6; }
.g-tools { width: 372px; }
.g-tools .tools { padding-left: 7px; }
.g-tools .col:nth-child(2) { width: 111px; margin-left: 6px; }
.g-curves { width: 79px; }
.g-curves .big { width: 80px; }
.g-picks { width: 198px; }
.g-picks .big { width: 66px; }
.g-edit { width: 266px; }
.g-edit .tools { padding-left: 11px; }
.g-edit .big:nth-child(2) { width: 72px; }
.g-edit .col { width: 46px; }
.g-edit .col .caret, .g-wcs .col .caret { margin-left: 3px; }
.g-wcs { width: 120px; }
.g-wcs .big { width: 74px; }
.g-section { width: 230px; }
.g-section .big { width: 78px; }
.fields { display: grid; grid-template-columns: 66px 80px; grid-template-rows: 28px 28px 28px; row-gap: 2px; align-items: center; }
.pick { display: flex; align-items: center; position: relative; }
.fields select, .fields > input { width: 100%; height: 28px; border: 1px solid #d5d5d5; background: #fff; padding: 0 3px; appearance: none; outline: 0; }
.pick .caret { position: absolute; right: 9px; }
.slide { grid-column: 1 / 3; display: flex; align-items: center; gap: 8px; padding: 0 2px; }
.slide button { width: 12px; color: #333; font-size: 18px; line-height: 20px; }
.slide input { flex: 1; min-width: 0; height: 14px; margin: 0; appearance: none; background: linear-gradient(#777, #777) center / 100% 1px no-repeat; }
.slide input::-webkit-slider-thumb { appearance: none; width: 6px; height: 14px; border: 1px solid #777; background: #fff; }

.work { flex: 1; display: flex; min-height: 0; }
aside { flex: none; display: flex; flex-direction: column; width: 279px; }
.paneltitle { display: flex; align-items: center; justify-content: space-between; flex: none; height: 20px; padding: 0 5px 0 7px; background: #fff; color: #111; }
.paneltitle h3, .viewtabs, .doctab, .find { font: 13px/20px "Liberation Mono", monospace; }
.paneltitle h3 { padding-top: 2px; }
.x svg { display: block; width: 10px; height: 10px; stroke: #444; stroke-width: 2; }
aside .paneltitle { margin-top: 1px; }
.find { height: 23px; margin: 4px 0; padding: 0 3px; border: 1px solid #d0d0d0; background: #fff; outline: 0; }
.find::placeholder { color: #aaa; }
.treebox { flex: 1; min-height: 0; padding: 0 0 0 9px; background: #fff; border: 1px solid #a5a5a5; border-bottom: 0; overflow: hidden; color: #1a1a1a; font: 14px/20px "Noto Sans", sans-serif; }
.tree li { background: repeating-linear-gradient(#888 0 1px, transparent 1px 2px) 5px 0 / 1px 100% no-repeat; }
.tree li:last-child { background-size: 1px 10px; }
.tree > li:first-child { background-position: 5px 10px; }
.tree ul { margin-left: 24px; }
.row { display: flex; align-items: center; height: 20px; white-space: nowrap; }
.row svg { width: 18px; height: 18px; margin-right: 7px; }
.joint { display: flex; align-items: center; width: 15px; height: 20px; margin-left: 5px; background: repeating-linear-gradient(90deg, #888 0 1px, transparent 1px 2px) 0 10px / 13px 1px no-repeat; }
.leafs .joint { margin-right: 12px; }
.joint button { flex: none; width: 11px; height: 11px; margin-left: -5px; border: 1px solid #999; border-radius: 1px; }
.minus { background: linear-gradient(#3a54a5, #3a54a5) center / 5px 1px no-repeat, #f4f4f4; }
.plus { background: linear-gradient(#3a54a5, #3a54a5) center / 5px 1px no-repeat, linear-gradient(#3a54a5, #3a54a5) center / 1px 5px no-repeat, #f4f4f4; }

main { flex: 1; display: flex; flex-direction: column; min-width: 0; margin-left: 5px; }
.doctabs { flex: none; display: flex; height: 36px; padding-top: 2px; border-bottom: 1px solid #8f8f8f; }
.doctab { display: flex; align-items: center; gap: 5px; width: 94px; padding-left: 14px; border: 1px solid #d0d0d0; border-bottom: 0; border-radius: 3px 3px 0 0; background: #fff; }
.doctab svg { width: 20px; height: 20px; }
.doctab button { display: flex; align-items: center; justify-content: center; width: 17px; height: 17px; border: 1px solid #d84f35; border-radius: 2px; background: #df7a51; }
.doctab button svg { width: 8px; height: 8px; stroke: #fff; stroke-width: 3; }
.view { position: relative; flex: 1; min-height: 0; overflow: hidden; padding: 6px; border: 1px solid #999; border-width: 1px 0 1px 1px; margin: 2px 0 0 2px; background: linear-gradient(#a1a8b9, #fff); }
.scene { position: absolute; inset: 0; width: 100%; height: 100%; }
.hint { position: relative; width: fit-content; height: 26px; margin-bottom: 3px; padding: 0 8px 0 5px; background: rgba(255, 255, 255, 0.7); color: #6d6462; font: bold 14px/26px "Liberation Mono", monospace; }
.axes { position: absolute; right: 0; bottom: 41px; width: 120px; height: 120px; }
.axes text { font: bold 18px "DejaVu Sans", sans-serif; text-anchor: middle; }
.viewtabs { flex: none; display: flex; height: 23px; border-top: 1px solid #bbb; background: #fff; }
.viewtabs button { width: 125px; line-height: 18px; }
.viewtabs .on { border-right: 1px solid #bbb; border-bottom: 2px solid #00588a; }
.viewtabs .alt { background: linear-gradient(#bbb, #bbb) right / 1px 12px no-repeat; }
.panels { flex: none; display: flex; height: 137px; gap: 5px; padding-top: 5px; }
.params, .messages { display: flex; flex-direction: column; min-width: 0; }
.params { flex: 1043; }
.messages { flex: 564; }
.tablebox { flex: 1; border: 1px solid #999fa8; border-bottom: 0; background: #fff; }
table { width: 100%; border-collapse: collapse; table-layout: fixed; }
th { height: 30px; padding: 0 5px; border-right: 1px solid #ddd; font-weight: 400; text-align: left; }
.filter { width: 30px; padding: 0 5px 4px; }
.filter svg { display: block; width: 16px; height: 19px; }
td { height: 25px; padding: 0; border-bottom: 1px solid #ddd; }
.new { color: #c4c4c4; text-align: center; }
.msgbar { flex: none; display: flex; gap: 7px; height: 24px; }
.msgbar button { display: flex; align-items: center; justify-content: center; width: 28px; background: #fff; }
.msgbar .clear { margin-left: 8px; background: none; }
.msgbar svg { width: 19px; height: 19px; }
.msgbody { flex: 1; border: solid #a5a5a5; border-width: 1px 0 0 1px; background: #fff; }
.marks { position: absolute; left: 0; top: 0; width: 1200px; height: 400px; pointer-events: none; }
.stamp { position: absolute; right: 9px; bottom: 7px; color: #dcdcdc; font: 16px/22px "Liberation Sans", sans-serif; }
```
